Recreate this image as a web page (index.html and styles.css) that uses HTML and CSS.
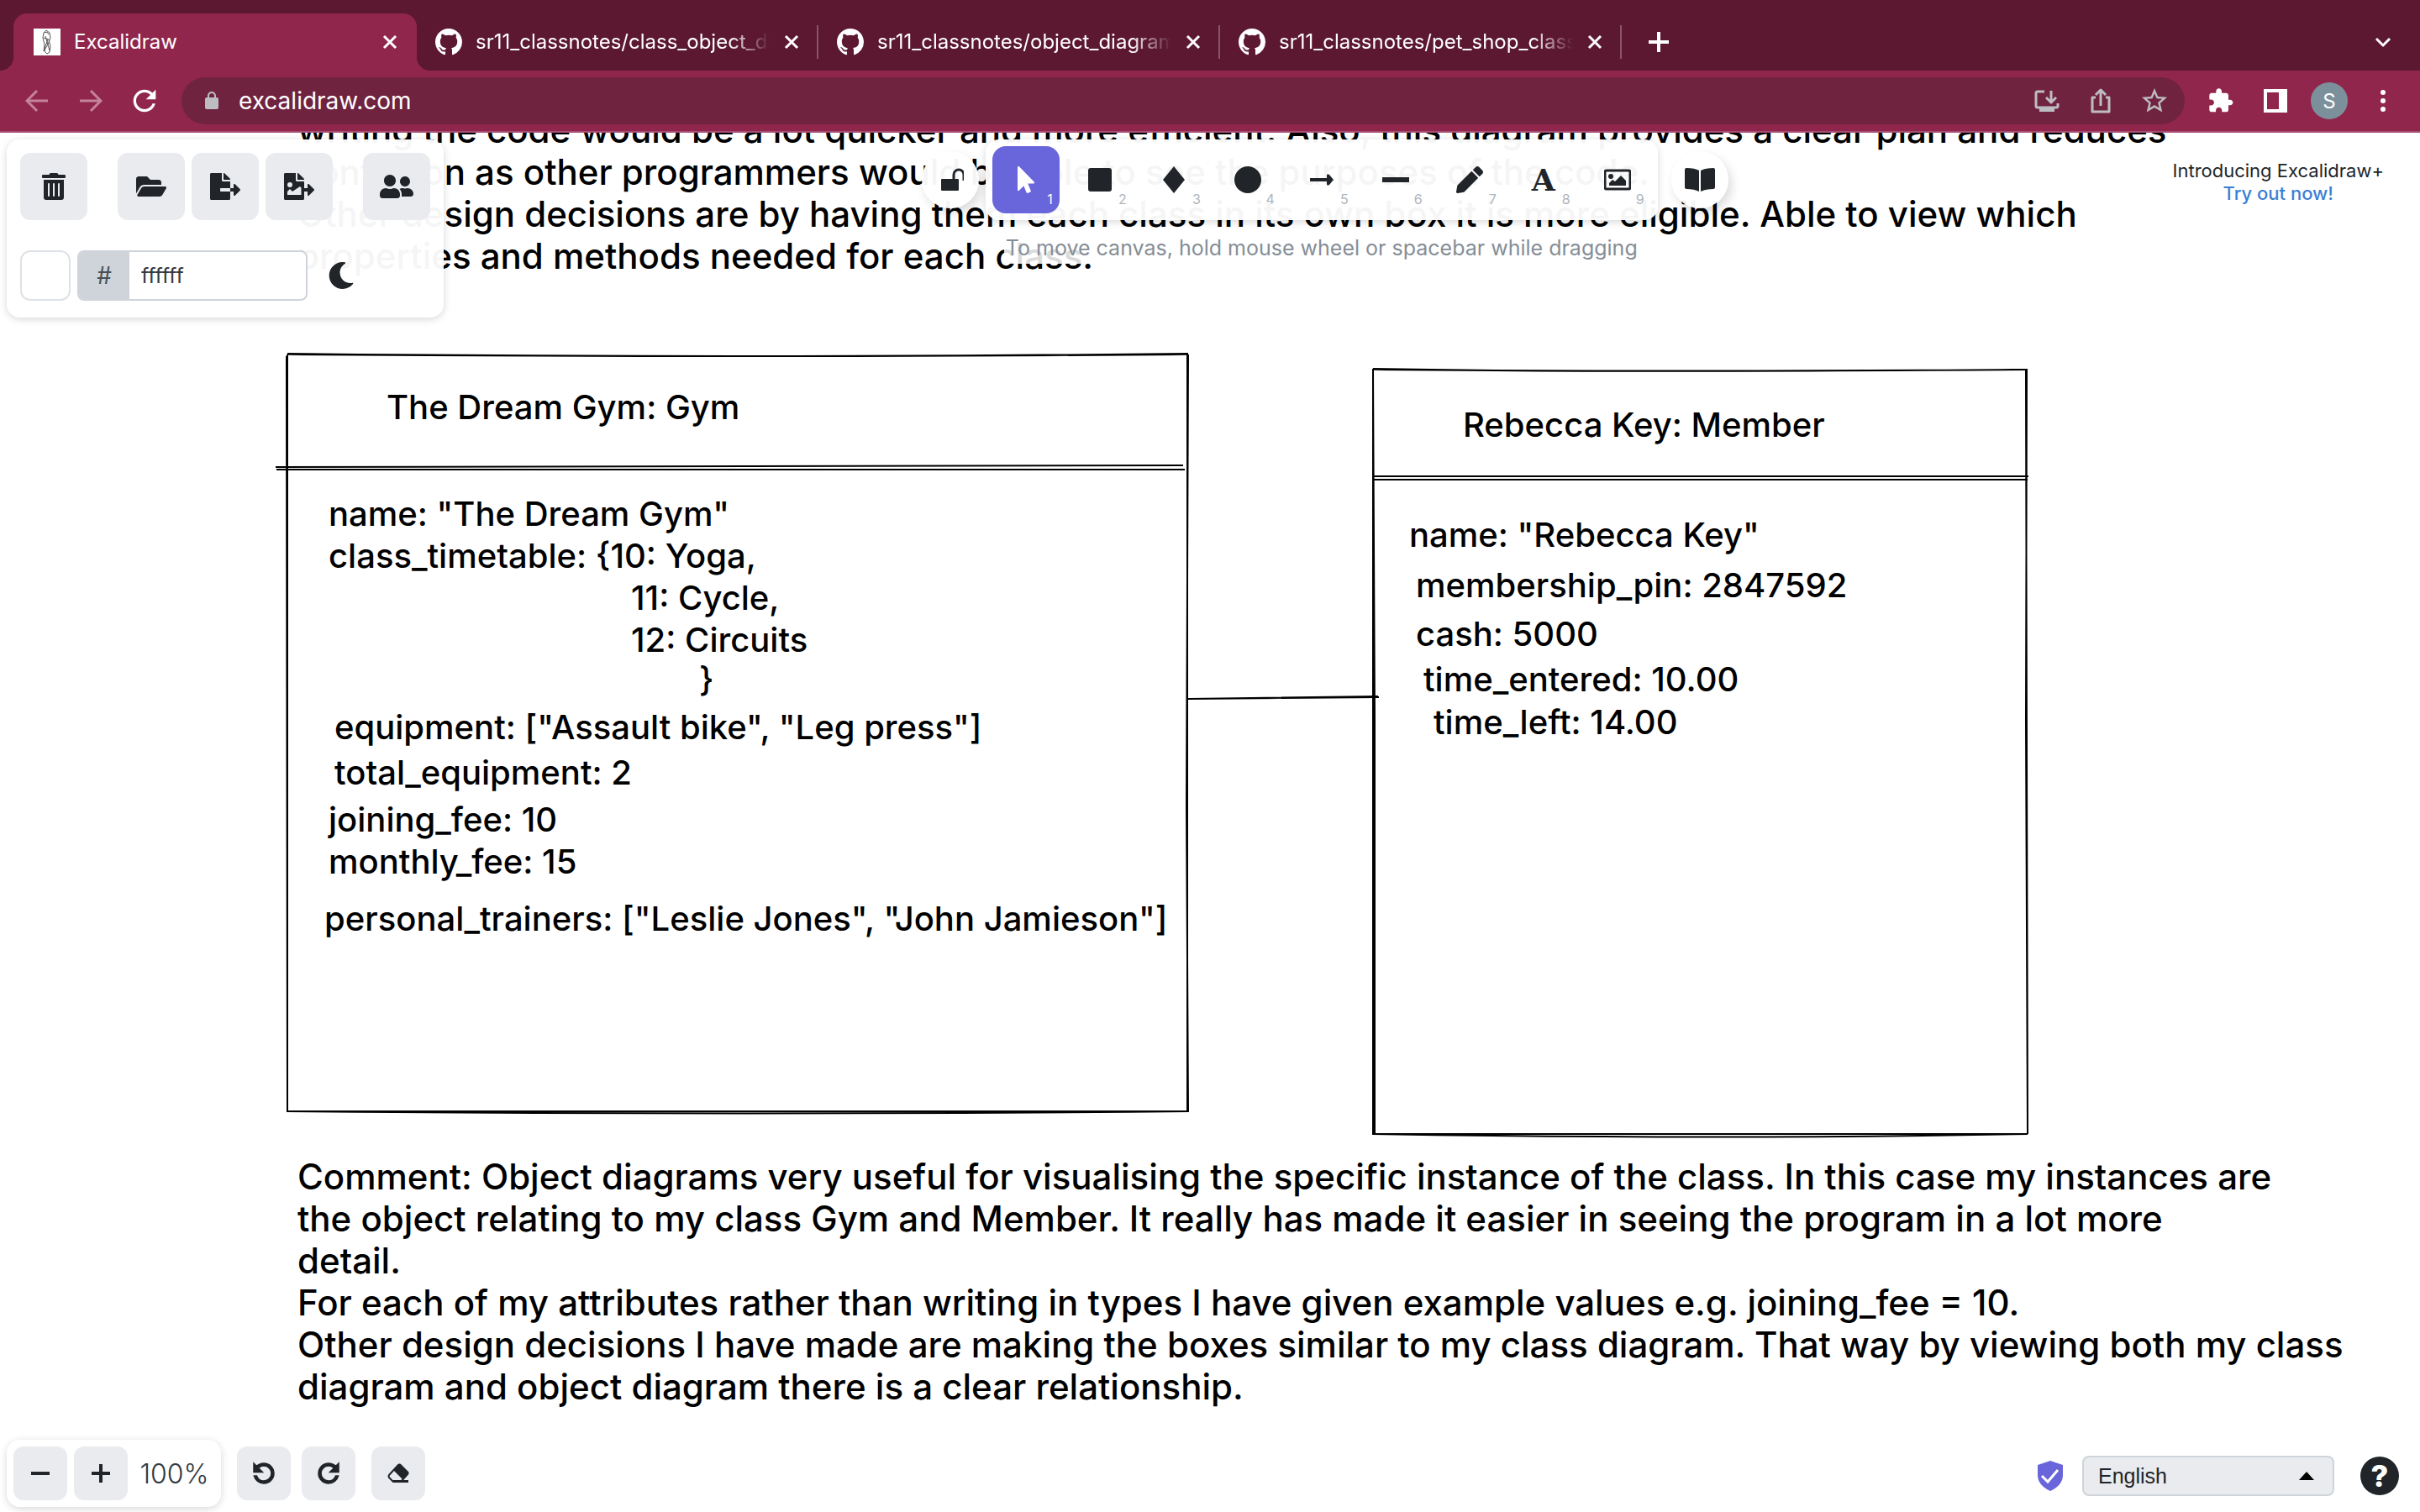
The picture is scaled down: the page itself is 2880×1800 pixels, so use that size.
FILE: index.html
```html
<!DOCTYPE html>
<html lang="en">
<head>
<meta charset="utf-8">
<title>Excalidraw</title>
<link rel="stylesheet" href="styles.css">
</head>
<body>
<svg class="defs" aria-hidden="true">
  <symbol id="github" viewBox="0 0 16 16"><path d="M8 0C3.58 0 0 3.58 0 8c0 3.54 2.29 6.53 5.47 7.59.4.07.55-.17.55-.38 0-.19-.01-.82-.01-1.49-2.01.37-2.53-.49-2.69-.94-.09-.23-.48-.94-.82-1.13-.28-.15-.68-.52-.01-.53.63-.01 1.08.58 1.23.82.72 1.21 1.87.87 2.33.66.07-.52.28-.87.51-1.07-1.78-.2-3.64-.89-3.64-3.95 0-.87.31-1.59.82-2.15-.08-.2-.36-1.02.08-2.12 0 0 .67-.21 2.2.82.64-.18 1.32-.27 2-.27.68 0 1.36.09 2 .27 1.53-1.04 2.2-.82 2.2-.82.44 1.1.16 1.92.08 2.12.51.56.82 1.27.82 2.15 0 3.07-1.87 3.75-3.65 3.95.29.25.54.73.54 1.48 0 1.07-.01 1.93-.01 2.2 0 .21.15.46.55.38A8.013 8.013 0 0016 8c0-4.42-3.58-8-8-8z"/></symbol>
  <symbol id="cross" viewBox="0 0 20 20"><path d="M3 3l14 14M17 3L3 17" fill="none" stroke="currentColor" stroke-width="3"/></symbol>
  <symbol id="turn" viewBox="0 0 24 24"><path d="M17.65 6.35C16.2 4.9 14.21 4 12 4c-4.42 0-7.99 3.58-7.99 8s3.57 8 7.99 8c3.73 0 6.84-2.55 7.73-6h-2.08c-.82 2.33-3.04 4-5.65 4-3.31 0-6-2.69-6-6s2.69-6 6-6c1.66 0 3.14.69 4.22 1.78L13 11h7V4l-2.35 2.35z"/></symbol>
</svg>

<header class="browser">
  <nav class="tabs" aria-label="Tabs">
    <div class="tab tab-active">
      <svg class="favicon" viewBox="0 0 32 32"><path fill="#fff" d="M0 0h32v32H0z"/><path d="M15 2l4 3 1 6-3 8-5 8 1-8-2-8 1-6zM13 5l3-1 2 3M12 11l6 2 2 8-1 7-3 2-3-3 1-6 3-8M14 9l5 17" fill="none" stroke="#555" stroke-width="1"/></svg>
      <span class="tab-title">Excalidraw</span>
      <button class="bare" aria-label="Close tab"><svg class="i20"><use href="#cross"/></svg></button>
    </div>
    <div class="tab">
      <svg class="favicon"><use href="#github"/></svg>
      <span class="tab-title faded">sr11_classnotes/class_object_diagram</span>
      <button class="bare" aria-label="Close tab"><svg class="i20"><use href="#cross"/></svg></button>
    </div>
    <div class="tab">
      <svg class="favicon"><use href="#github"/></svg>
      <span class="tab-title faded">sr11_classnotes/object_diagram</span>
      <button class="bare" aria-label="Close tab"><svg class="i20"><use href="#cross"/></svg></button>
    </div>
    <div class="tab">
      <svg class="favicon"><use href="#github"/></svg>
      <span class="tab-title faded">sr11_classnotes/pet_shop_class</span>
      <button class="bare" aria-label="Close tab"><svg class="i20"><use href="#cross"/></svg></button>
    </div>
    <button class="bare new-tab" aria-label="New tab"><svg class="i24" viewBox="0 0 24 24"><path d="M12 0v24M0 12h24" stroke="#fff" stroke-width="4"/></svg></button>
    <button class="bare tab-search" aria-label="Search tabs"><svg class="i20" viewBox="0 0 20 20"><path d="M2 6l8 8 8-8" fill="none" stroke="#fff" stroke-width="3"/></svg></button>
  </nav>
  <div class="nav">
    <div class="nav-buttons">
      <button class="bare dim" aria-label="Back"><svg class="i28" viewBox="0 0 28 28"><path d="M27 14H2M14 2L2 14l12 12" fill="none" stroke="currentColor" stroke-width="3"/></svg></button>
      <button class="bare dim" aria-label="Forward"><svg class="i28" viewBox="0 0 28 28"><path d="M1 14h25M14 2l12 12-12 12" fill="none" stroke="currentColor" stroke-width="3"/></svg></button>
      <button class="bare" aria-label="Reload"><svg class="i40"><use href="#turn"/></svg></button>
    </div>
    <div class="omnibox">
      <svg class="i24 grey" viewBox="0 0 24 24"><path d="M18 8h-1V6c0-2.76-2.24-5-5-5S7 3.24 7 6v2H6c-1.1 0-2 .9-2 2v10c0 1.1.9 2 2 2h12c1.1 0 2-.9 2-2V10c0-1.1-.9-2-2-2zM9 6c0-1.66 1.34-3 3-3s3 1.34 3 3v2H9V6z"/></svg>
      <input class="url" type="text" value="excalidraw.com" aria-label="Address">
      <button class="bare grey" aria-label="Install"><svg class="i36" viewBox="0 0 36 36"><path d="M15 7H7q-2 0-2 2v15q0 2 2 2h22q2 0 2-2v-3M23 6v13M17 14l6 6 6-6" fill="none" stroke="currentColor" stroke-width="3"/><path d="M9 27h18v4H9z"/></svg></button>
      <button class="bare grey" aria-label="Share"><svg class="i36" viewBox="0 0 36 36"><path d="M12 14H8v17h20V14h-4M18 24V6M12 11l6-6 6 6" fill="none" stroke="currentColor" stroke-width="3" stroke-linejoin="round"/></svg></button>
      <button class="bare grey" aria-label="Bookmark"><svg class="i36" viewBox="0 0 24 24"><path d="M22 9.24l-7.19-.62L12 2 9.19 8.63 2 9.24l5.46 4.73L5.82 21 12 17.27 18.18 21l-1.63-7.03L22 9.24zM12 15.4l-3.76 2.27 1-4.28-3.32-2.88 4.38-.38L12 6.1l1.71 4.04 4.38.38-3.32 2.88 1 4.28L12 15.4z"/></svg></button>
    </div>
    <div class="nav-tools">
      <button class="bare" aria-label="Extensions"><svg class="i32" viewBox="1 0 24 24"><path d="M20.5 11H19V7c0-1.1-.9-2-2-2h-4V3.5C13 2.12 11.88 1 10.5 1S8 2.12 8 3.5V5H4c-1.1 0-1.99.9-1.99 2v3.8H3.5c1.49 0 2.7 1.21 2.7 2.7s-1.21 2.7-2.7 2.7H2V20c0 1.1.9 2 2 2h3.8v-1.5c0-1.49 1.21-2.7 2.7-2.7 1.49 0 2.7 1.21 2.7 2.7V22H17c1.1 0 2-.9 2-2v-4h1.5c1.38 0 2.5-1.12 2.5-2.5S21.88 11 20.5 11z"/></svg></button>
      <button class="bare" aria-label="Side panel"><svg class="i28" viewBox="0 0 28 28"><path fill-rule="evenodd" d="M0 0h28v28H0zM4 4v20h14V4z"/></svg></button>
      <button class="bare avatar" aria-label="Profile">S</button>
      <button class="bare" aria-label="Menu"><svg class="i28" viewBox="0 0 28 28"><circle cx="14" cy="4" r="3"/><circle cx="14" cy="14" r="3"/><circle cx="14" cy="24" r="3"/></svg></button>
    </div>
  </div>
</header>

<main class="app">
  <div class="scene">
    <svg class="shapes" aria-hidden="true">
      <path d="M342 263Q870 269 1414 263M342 264Q900 268 1413 264"/>
      <path d="M342 264V1165M341 266L342 1165M1414 264L1412 800 1414 1166M1413 264V1165"/>
      <path d="M341 1165H1414M342 1165Q900 1170 1414 1165"/>
      <path d="M328 398L1408 396M329 401H1410"/>
      <path d="M1634 281Q1900 286 2412 282M1634 282Q2000 285 2411 282"/>
      <path d="M1634 281V1193M1634 282L1636 700V1192M2412 281L2411 700 2413 1192M2411 282L2413 1192"/>
      <path d="M1633 1192H2413M1634 1192Q2050 1199 2413 1192"/>
      <path d="M1635 409H2414M1634 413H2413"/>
      <path d="M1414 674L1641 672M1416 674L1640 671"/>
    </svg>
    <p class="note note-top">writing the code would be a lot quicker and more efficient. Also, this diagram provides a clear plan and reduces<br>confusion as other programmers would be able to see the purposes of the code.<br>Other design decisions are by having them each class in its own box it is more eligible. Able to view which<br>properties and methods needed for each class.</p>
    <h2 class="label gym-title">The Dream Gym: Gym</h2>
    <p class="label gym-name">name: "The Dream Gym"</p>
    <p class="label gym-timetable">class_timetable: {10: Yoga,</p>
    <p class="label gym-slot-11">11: Cycle,</p>
    <p class="label gym-slot-12">12: Circuits</p>
    <p class="label gym-brace">}</p>
    <p class="label gym-equipment">equipment: ["Assault bike", "Leg press"]</p>
    <p class="label gym-total">total_equipment: 2</p>
    <p class="label gym-joining">joining_fee: 10</p>
    <p class="label gym-monthly">monthly_fee: 15</p>
    <p class="label gym-trainers">personal_trainers: ["Leslie Jones", "John Jamieson"]</p>
    <h2 class="label member-title">Rebecca Key: Member</h2>
    <p class="label member-name">name: "Rebecca Key"</p>
    <p class="label member-pin">membership_pin: 2847592</p>
    <p class="label member-cash">cash: 5000</p>
    <p class="label member-entered">time_entered: 10.00</p>
    <p class="label member-left">time_left: 14.00</p>
    <p class="note note-bottom">Comment: Object diagrams very useful for visualising the specific instance of the class. In this case my instances are<br>the object relating to my class Gym and Member. It really has made it easier in seeing the program in a lot more<br>detail.<br>For each of my attributes rather than writing in types I have given example values e.g. joining_fee = 10.<br>Other design decisions I have made are making the boxes similar to my class diagram. That way by viewing both my class<br>diagram and object diagram there is a clear relationship.</p>
  </div>

  <div class="ui">
    <div class="ui-top">
      <section class="island menu" aria-label="Canvas actions">
        <div class="menu-row">
          <button class="tool filled" aria-label="Reset the canvas"><svg class="i32" viewBox="0 0 448 512"><path d="M32 464a48 48 0 0 0 48 48h288a48 48 0 0 0 48-48V128H32zm272-256a16 16 0 0 1 32 0v224a16 16 0 0 1-32 0zm-96 0a16 16 0 0 1 32 0v224a16 16 0 0 1-32 0zm-96 0a16 16 0 0 1 32 0v224a16 16 0 0 1-32 0zM432 32H312l-9.4-18.7A24 24 0 0 0 281.1 0H166.8a23.72 23.72 0 0 0-21.4 13.3L136 32H16A16 16 0 0 0 0 48v32a16 16 0 0 0 16 16h416a16 16 0 0 0 16-16V48a16 16 0 0 0-16-16z"/></svg></button>
          <div class="group">
            <button class="tool filled" aria-label="Open"><svg class="i36" viewBox="0 0 576 512"><path d="M572.694 292.093L500.27 416.248A63.997 63.997 0 0 1 444.989 448H45.025c-18.523 0-30.064-20.093-20.731-36.093l72.424-124.155A64 64 0 0 1 152 256h399.964c18.523 0 30.064 20.093 20.73 36.093zM152 224h328v-48c0-26.51-21.49-48-48-48H272l-64-64H48C21.49 64 0 85.49 0 112v278.046l69.077-118.418C86.214 242.25 117.989 224 152 224z"/></svg></button>
            <button class="tool filled" aria-label="Save to disk"><svg class="i36" viewBox="0 0 576 512"><path d="M384 121.9c0-6.3-2.5-12.4-7-16.9L279.1 7c-4.5-4.5-10.6-7-17-7H256v128h128zM571 308l-95.7-96.4c-10.1-10.1-27.4-3-27.4 11.3V288h-64v64h64v65.2c0 14.3 17.3 21.4 27.4 11.3L571 332c6.6-6.6 6.6-17.4 0-24zm-379 28v-32c0-8.8 7.2-16 16-16h176V160H248c-13.2 0-24-10.8-24-24V0H24C10.7 0 0 10.7 0 24v464c0 13.3 10.7 24 24 24h336c13.3 0 24-10.7 24-24V352H208c-8.8 0-16-7.2-16-16z"/></svg></button>
            <button class="tool filled" aria-label="Save as image"><svg class="i36" viewBox="0 0 576 512"><path fill-rule="evenodd" d="M384 121.9c0-6.3-2.5-12.4-7-16.9L279.1 7c-4.5-4.5-10.6-7-17-7H256v128h128zM571 308l-95.7-96.4c-10.1-10.1-27.4-3-27.4 11.3V288h-64v64h64v65.2c0 14.3 17.3 21.4 27.4 11.3L571 332c6.6-6.6 6.6-17.4 0-24zM384 160H248c-13.2 0-24-10.8-24-24V0H24C10.7 0 0 10.7 0 24v464c0 13.3 10.7 24 24 24h336c13.3 0 24-10.7 24-24zM112 176a48 48 0 1 1 0 96 48 48 0 0 1 0-96zM64 416v-64l48-48 48 48 144-96 24 24v136z"/></svg></button>
          </div>
          <button class="tool filled" aria-label="Live collaboration"><svg class="i40" viewBox="0 0 640 512"><path d="M192 256c61.9 0 112-50.1 112-112S253.9 32 192 32 80 82.1 80 144s50.1 112 112 112zm76.8 32h-8.3c-20.8 10-43.9 16-68.5 16s-47.6-6-68.5-16h-8.3C51.6 288 0 339.6 0 403.2V432c0 26.5 21.5 48 48 48h288c26.5 0 48-21.5 48-48v-28.8c0-63.6-51.6-115.2-115.2-115.2zM480 256c53 0 96-43 96-96s-43-96-96-96-96 43-96 96 43 96 96 96zm48 32h-3.8c-13.9 4.8-28.6 8-44.2 8s-30.3-3.2-44.2-8H432c-20.4 0-39.2 5.9-55.7 15.4 24.4 26.3 39.7 61.2 39.7 99.8v38.4c0 2.2-.5 4.3-.6 6.4H592c26.5 0 48-21.5 48-48 0-61.9-50.1-112-112-112z"/></svg></button>
        </div>
        <div class="group">
          <button class="swatch" aria-label="Canvas background"></button>
          <div class="hex">
            <label class="hash" for="hex">#</label>
            <input class="hex-value" id="hex" type="text" value="ffffff">
          </div>
          <button class="bare theme" aria-label="Dark mode"><svg class="i32" viewBox="0 0 512 512"><path d="M283.211 512c78.962 0 151.079-35.925 198.857-94.792 7.068-8.708-.639-21.43-11.562-19.35-124.203 23.654-238.262-71.576-238.262-196.954 0-72.222 38.662-138.635 101.498-174.394 9.686-5.512 7.25-20.197-3.756-22.23A258.156 258.156 0 0 0 283.211 0c-141.309 0-256 114.511-256 256 0 141.309 114.511 256 256 256z"/></svg></button>
        </div>
      </section>

      <div class="toolbar">
        <div class="toolbar-row">
          <button class="round" aria-label="Keep tool active"><svg class="i32" viewBox="-4 0 32 32"><rect x="1" y="15" width="21" height="14" rx="1"/><path d="M16 15V10a6 6 0 0 1 12 0v7" fill="none" stroke="currentColor" stroke-width="3"/></svg></button>
          <div class="island shapes-bar">
            <button class="tool selected" aria-label="Selection"><svg class="i32" viewBox="0 0 320 512"><path d="M302.189 329.126H196.105l55.831 135.993c3.889 9.428-.555 19.999-9.444 23.999l-49.165 21.427c-9.165 4-19.443-.571-23.332-9.714l-53.053-129.136-86.664 89.138C18.729 472.71 0 463.554 0 447.977V18.299C0 1.899 19.921-6.096 30.277 5.443l284.412 292.542c11.472 11.179 3.007 31.141-12.5 31.141z"/></svg><span class="key">1</span></button>
            <button class="tool" aria-label="Rectangle"><svg class="i32" viewBox="0 0 32 32"><rect x="2" y="2" width="28" height="28" rx="3"/></svg><span class="key">2</span></button>
            <button class="tool" aria-label="Diamond"><svg class="i32" viewBox="0 0 32 32"><path d="M16 0l13 16-13 16L3 16z"/></svg><span class="key">3</span></button>
            <button class="tool" aria-label="Ellipse"><svg class="i32" viewBox="0 0 32 32"><circle cx="16" cy="16" r="16"/></svg><span class="key">4</span></button>
            <button class="tool" aria-label="Arrow"><svg class="i32" viewBox="0 0 32 32"><path d="M2 14h20v-3q0-3 3-1l5 6-5 6q-3 2-3-1v-3H2z"/></svg><span class="key">5</span></button>
            <button class="tool" aria-label="Line"><svg class="i32" viewBox="0 0 32 32"><path d="M0 13h32v6H0z"/></svg><span class="key">6</span></button>
            <button class="tool" aria-label="Draw"><svg class="i32" viewBox="0 0 512 512"><path d="M497.9 142.1l-46.1 46.1c-4.7 4.7-12.3 4.7-17 0l-111-111c-4.7-4.7-4.7-12.3 0-17l46.1-46.1c18.7-18.7 49.1-18.7 67.9 0l60.1 60.1c18.8 18.7 18.8 49.1 0 67.9zM284.2 99.8L21.6 362.4.4 483.9c-2.9 16.4 11.4 30.6 27.8 27.8l121.5-21.3 262.6-262.6c4.7-4.7 4.7-12.3 0-17l-111-111c-4.8-4.7-12.4-4.7-17.1 0z"/></svg><span class="key">7</span></button>
            <button class="tool" aria-label="Text"><span class="letter">A</span><span class="key">8</span></button>
            <button class="tool" aria-label="Insert image"><svg class="i32" viewBox="0 0 32 32"><rect x="1" y="5" width="30" height="22" rx="2" fill="none" stroke="currentColor" stroke-width="3"/><circle cx="8" cy="12" r="3"/><path d="M6 23v-3l4-4 3 2 7-7 6 6v6z"/></svg><span class="key">9</span></button>
          </div>
          <button class="round library" aria-label="Library"><svg class="i36" viewBox="0 0 36 36"><path d="M0 6q0-2 2-2 10 0 15 3v25Q11 29 2 29q-2 0-2-2zM36 6q0-2-2-2-10 0-15 3v25q6-3 15-3 2 0 2-2z"/></svg></button>
        </div>
        <p class="hint">To move canvas, hold mouse wheel or spacebar while dragging</p>
      </div>

      <p class="promo">Introducing Excalidraw+<br><a class="promo-link" href="#">Try out now!</a></p>
    </div>

    <footer class="ui-bottom">
      <div class="island zoom">
        <button class="tool small" aria-label="Zoom out"><svg class="i24" viewBox="0 0 24 24"><path d="M1 12h22" stroke="currentColor" stroke-width="4"/></svg></button>
        <button class="tool small" aria-label="Zoom in"><svg class="i24" viewBox="0 0 24 24"><path d="M1 12h22M12 1v22" stroke="currentColor" stroke-width="4"/></svg></button>
        <button class="bare zoom-value">100%</button>
      </div>
      <div class="history">
        <button class="tool small" aria-label="Undo"><svg class="i36 bold flip"><use href="#turn"/></svg></button>
        <button class="tool small" aria-label="Redo"><svg class="i36 bold"><use href="#turn"/></svg></button>
      </div>
      <button class="tool small" aria-label="Eraser"><svg class="i28" viewBox="0 0 28 28"><path d="M16 4l9 9q1 1 0 2l-8 9H8l-5-5q-1-2 0-3L14 4q1-1 2 0z" fill="none" stroke="currentColor" stroke-width="2"/><path d="M8 10l7-7q1-1 2 0l9 9q1 1 0 2l-7 7zM8 22h18v3H8z"/></svg></button>
      <div class="footer-right">
        <a class="shield" href="#" aria-label="Encryption"><svg class="i36" viewBox="0 0 36 36"><path fill="#6965db" d="M18 0l15 5v12q0 12-15 19Q3 29 3 17V5z"/><path d="M8 18l7 7 12-14" fill="none" stroke="#fff" stroke-width="3"/></svg></a>
        <label class="language">
          <select class="language-select" aria-label="Language"><option>English</option></select>
          <svg class="language-arrow" viewBox="0 0 18 10"><path d="M0 10l9-10 9 10z"/></svg>
        </label>
        <button class="help" aria-label="Help">?</button>
      </div>
    </footer>
  </div>
</main>
</body>
</html>
```
FILE: styles.css
```css
* {
  box-sizing: border-box;
}

body {
  margin: 0;
  min-height: 100vh;
  display: flex;
  flex-direction: column;
  background: #fff;
  color: #212529;
  font-family: Inter, "Liberation Sans", sans-serif;
}

svg {
  display: block;
  flex: none;
  fill: currentColor;
}

p,
h2 {
  margin: 0;
}

button,
input,
select {
  margin: 0;
  padding: 0;
  border: 0;
  background: none;
  color: inherit;
  font: inherit;
}

.defs {
  position: absolute;
  width: 0;
  height: 0;
}

.i20 { width: 20px; height: 20px; }
.i24 { width: 24px; height: 24px; }
.i28 { width: 28px; height: 28px; }
.i32 { width: 32px; height: 32px; }
.i36 { width: 36px; height: 36px; }
.i40 { width: 40px; height: 40px; }

.bare {
  display: flex;
  align-items: center;
  justify-content: center;
}

/* Browser window */

.browser {
  background: #90264c;
  color: #fff;
  border-bottom: 2px solid #a64f74;
}

.tabs {
  display: flex;
  align-items: center;
  height: 84px;
  padding: 16px 34px 0 16px;
  background: #5c1831;
}

.tab {
  position: relative;
  display: flex;
  align-items: center;
  gap: 16px;
  width: 478px;
  height: 40px;
  padding: 0 20px 0 22px;
  border-right: 2px solid #8a5568;
}

.tab-active {
  width: 480px;
  height: 68px;
  padding: 0 22px 0 24px;
  border: 0;
  border-radius: 16px 16px 0 0;
  background: #90264c;
}

.tab-active::before,
.tab-active::after {
  content: "";
  position: absolute;
  bottom: 0;
  width: 16px;
  height: 16px;
}

.tab-active::before {
  right: 100%;
  background: radial-gradient(circle at 0 0, transparent 16px, #90264c 16px);
}

.tab-active::after {
  left: 100%;
  background: radial-gradient(circle at 100% 0, transparent 16px, #90264c 16px);
}

.favicon {
  width: 32px;
  height: 32px;
}

.tab-title {
  flex: 1;
  min-width: 0;
  overflow: hidden;
  white-space: nowrap;
  font-size: 24px;
  line-height: 32px;
}

.faded {
  mask-image: linear-gradient(to right, #000 86%, transparent);
}

.new-tab {
  margin-left: 32px;
}

.tab-search {
  margin-left: auto;
}

.nav {
  display: flex;
  align-items: center;
  height: 72px;
  padding: 0 22px 0 30px;
}

.nav-buttons {
  display: flex;
  align-items: center;
  gap: 36px;
  width: 186px;
}

.nav-buttons .i40 {
  margin-left: -6px;
}

.dim {
  color: #c4839b;
}

.grey {
  color: #bdbdc1;
}

.omnibox {
  flex: 1;
  display: flex;
  align-items: center;
  gap: 28px;
  height: 56px;
  padding: 0 18px 0 24px;
  border-radius: 28px;
  background: #70233f;
}

.url {
  flex: 1;
  min-width: 0;
  height: 40px;
  margin-left: -8px;
  font-size: 28px;
}

.nav-tools {
  display: grid;
  grid-template-columns: repeat(4, 44px);
  align-items: center;
  gap: 20px;
  padding-left: 22px;
}

.avatar {
  height: 44px;
  border-radius: 50%;
  background: #7c909c;
  font-size: 24px;
}

/* Canvas */

.app {
  position: relative;
  flex: 1;
  display: flex;
}

.scene {
  position: absolute;
  inset: 0;
  overflow: hidden;
  color: #000;
}

.shapes {
  position: absolute;
  width: 100%;
  height: 100%;
  fill: none;
  stroke: #000;
  stroke-width: 2px;
}

.label,
.note {
  position: absolute;
  white-space: nowrap;
  font-size: 40px;
  font-weight: 500;
  line-height: 50px;
}

.note {
  left: 354px;
  font-size: 42px;
}

.note-top { top: -28px; }
.note-bottom { top: 1218px; }

.gym-title { left: 460px; top: 302px; }
.gym-name { left: 391px; top: 429px; }
.gym-timetable { left: 391px; top: 479px; }
.gym-slot-11 { left: 751px; top: 529px; }
.gym-slot-12 { left: 751px; top: 579px; }
.gym-brace { left: 832px; top: 626px; }
.gym-equipment { left: 398px; top: 683px; }
.gym-total { left: 398px; top: 737px; }
.gym-joining { left: 391px; top: 793px; }
.gym-monthly { left: 391px; top: 843px; }
.gym-trainers { left: 386px; top: 911px; }

.member-title { left: 1741px; top: 323px; }
.member-name { left: 1677px; top: 454px; }
.member-pin { left: 1685px; top: 514px; }
.member-cash { left: 1685px; top: 572px; }
.member-entered { left: 1694px; top: 626px; }
.member-left { left: 1706px; top: 677px; }

/* Interface over the canvas */

.ui {
  position: relative;
  flex: 1;
  display: flex;
  flex-direction: column;
  justify-content: space-between;
  padding: 8px 8px 6px;
}

.ui-top {
  display: grid;
  grid-template-columns: auto 1fr auto;
  align-items: start;
}

.island {
  border-radius: 16px;
  background: rgba(255, 255, 255, 0.96);
  box-shadow: 0 2px 10px rgba(0, 0, 0, 0.16);
}

.menu {
  display: flex;
  flex-direction: column;
  gap: 36px;
  padding: 16px 16px 20px;
}

.menu-row {
  display: flex;
  gap: 36px;
}

.group {
  display: flex;
  gap: 8px;
}

.tool {
  position: relative;
  display: flex;
  align-items: center;
  justify-content: center;
  width: 80px;
  height: 80px;
  border-radius: 12px;
}

.filled,
.small {
  background: #e9ebef;
}

.selected {
  border-radius: 16px;
  background: #6965db;
  color: #fff;
}

.small {
  width: 64px;
  height: 64px;
}

.swatch {
  width: 60px;
  height: 60px;
  border: 2px solid #dee2e6;
  border-radius: 12px;
  background: #fff;
}

.hex {
  display: flex;
  width: 274px;
  height: 60px;
  overflow: hidden;
  border: 2px solid #ced4da;
  border-radius: 8px;
  background: #fff;
}

.hash {
  width: 60px;
  background: #ced4da;
  color: #495057;
  font-size: 28px;
  line-height: 56px;
  text-align: center;
}

.hex-value {
  flex: 1;
  min-width: 0;
  padding-left: 14px;
  color: #343a40;
  font-size: 25px;
}

.theme {
  margin-left: 16px;
}

.toolbar {
  justify-self: center;
  display: flex;
  flex-direction: column;
  align-items: center;
  gap: 14px;
  padding-left: 40px;
}

.toolbar-row {
  display: flex;
  align-items: center;
  gap: 8px;
}

.shapes-bar {
  display: flex;
  gap: 8px;
  padding: 8px;
}

.round {
  display: flex;
  align-items: center;
  justify-content: center;
  width: 68px;
  height: 68px;
  border-radius: 50%;
  background: rgba(255, 255, 255, 0.96);
  box-shadow: 4px 6px 12px rgba(0, 0, 0, 0.14);
}

.library {
  margin-left: 8px;
}

.key {
  position: absolute;
  right: 8px;
  bottom: 8px;
  color: #adb5bd;
  font-size: 16px;
  line-height: 18px;
}

.selected .key {
  color: #fff;
}

.letter {
  font: bold 36px/40px "DejaVu Serif", serif;
}

.hint {
  margin-right: 8px;
  padding: 0 2px;
  background: rgba(255, 255, 255, 0.86);
  color: #868e96;
  font-size: 25px;
  line-height: 38px;
}

.promo {
  padding: 24px 35px 0 0;
  font-size: 22px;
  line-height: 27px;
  text-align: center;
}

.promo-link {
  color: #3b7fd4;
  font-weight: 500;
  text-decoration: none;
}

.ui-bottom {
  display: flex;
  align-items: center;
  gap: 19px;
}

.zoom {
  display: flex;
  gap: 8px;
  padding: 8px;
}

.zoom-value {
  width: 95px;
  color: #343a40;
  font-size: 32px;
  font-weight: 300;
}

.history {
  display: flex;
  gap: 13px;
}

.bold {
  stroke: currentColor;
  stroke-width: 1px;
}

.flip {
  transform: scaleX(-1);
}

.footer-right {
  display: flex;
  align-items: center;
  gap: 20px;
  margin-left: auto;
  padding: 6px 17px 0 0;
}

.language {
  position: relative;
  width: 300px;
}

.language-select {
  appearance: none;
  display: block;
  width: 100%;
  height: 48px;
  padding-left: 17px;
  border: 2px solid #ced4da;
  border-radius: 8px;
  background: #e9ebef;
  font: 25px "Liberation Sans", sans-serif;
}

.language-arrow {
  position: absolute;
  top: 19px;
  right: 24px;
  width: 18px;
  height: 10px;
  color: #000;
  pointer-events: none;
}

.help {
  width: 46px;
  height: 46px;
  margin-left: 11px;
  border-radius: 50%;
  background: #212529;
  color: #fff;
  font-size: 36px;
  font-weight: 800;
  line-height: 46px;
}
```
